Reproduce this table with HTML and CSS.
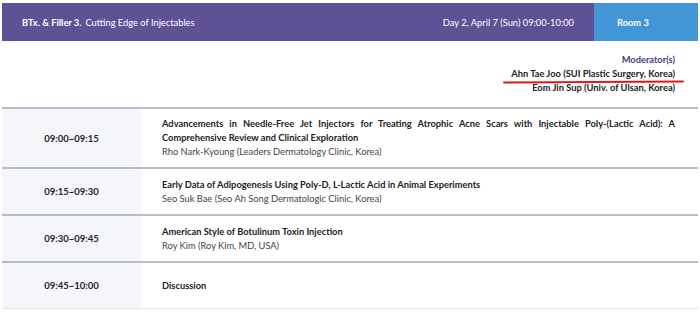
FILE: index.html
```html
<!DOCTYPE html>
<html>
<head>
<meta charset="utf-8">
<link rel="stylesheet" href="styles.css">
</head>
<body>
<div class="page">
  <div class="header">
    <div class="title"><b>BTx. &amp; Filler 3.</b> Cutting Edge of Injectables</div>
    <div class="date">Day 2, April 7 (Sun) 09:00-10:00</div>
    <div class="room">Room 3</div>
  </div>
  <div class="mods">
    <div class="mod-label">Moderator(s)</div>
    <div class="mod marked">Ahn Tae Joo (SUI Plastic Surgery, Korea)</div>
    <div class="mod">Eom Jin Sup (Univ. of Ulsan, Korea)</div>
  </div>
  <div class="table">
    <div class="row">
      <div class="time">09:00~09:15</div>
      <div class="content">
        <div class="talk">Advancements in Needle-Free Jet Injectors for Treating Atrophic Acne Scars with Injectable Poly-(Lactic Acid): A Comprehensive Review and Clinical Exploration</div>
        <div class="speaker">Rho Nark-Kyoung (Leaders Dermatology Clinic, Korea)</div>
      </div>
    </div>
    <div class="row">
      <div class="time">09:15~09:30</div>
      <div class="content">
        <div class="talk">Early Data of Adipogenesis Using Poly-D, L-Lactic Acid in Animal Experiments</div>
        <div class="speaker">Seo Suk Bae (Seo Ah Song Dermatologic Clinic, Korea)</div>
      </div>
    </div>
    <div class="row">
      <div class="time">09:30~09:45</div>
      <div class="content">
        <div class="talk">American Style of Botulinum Toxin Injection</div>
        <div class="speaker">Roy Kim (Roy Kim, MD, USA)</div>
      </div>
    </div>
    <div class="row last">
      <div class="time">09:45~10:00</div>
      <div class="content">
        <div class="talk">Discussion</div>
      </div>
    </div>
  </div>
</div>
</body>
</html>
```
FILE: styles.css
```css
* { box-sizing: border-box; }
body {
  margin: 0;
  background: #fff;
  font-family: Lato, "Open Sans", sans-serif;
  color: #222;
}
.page {
  padding: 3px 2px 0 2px;
}
.header {
  display: flex;
  height: 38px;
  align-items: stretch;
  background: #5e5196;
  color: #fff;
  font-size: 9.3px;
}
.title {
  flex: 1;
  display: flex;
  align-items: center;
  padding-left: 20px;
  gap: 4px;
}
.title b { font-weight: 700; }
.date {
  display: flex;
  align-items: center;
  padding-right: 20px;
}
.room {
  width: 104px;
  background: #4396d6;
  display: flex;
  align-items: center;
  padding-left: 23px;
  font-weight: 700;
}
.mods {
  display: flex;
  flex-direction: column;
  align-items: flex-end;
  padding: 12px 23px 12px 0;
  font-size: 9.3px;
  line-height: 14px;
}
.mod-label {
  color: #4d3a80;
  font-weight: 700;
}
.mod { font-weight: 700; color: #222; }
.marked { position: relative; }
.marked::after {
  content: "";
  position: absolute;
  left: -8px;
  right: -9px;
  bottom: -2px;
  height: 2px;
  background: #e8141c;
  border-radius: 2px;
  transform: rotate(-0.3deg);
}
.table {
  border-top: 2px solid #b8bbca;
}
.row {
  display: flex;
  border-bottom: 2px solid #b8bbca;
}
.row.last { border-bottom: 1px solid #e3e4ea; }
.time {
  width: 139px;
  flex: none;
  background: #f5f6fa;
  display: flex;
  align-items: center;
  justify-content: center;
  font-size: 9.5px;
  font-weight: 700;
  color: #222;
}
.content {
  flex: 1;
  padding: 8px 23px 8px 21px;
  min-height: 45px;
  display: flex;
  flex-direction: column;
  justify-content: center;
}
.talk {
  font-size: 9.3px;
  font-weight: 700;
  line-height: 14px;
  text-align: justify;
  color: #222;
}
.speaker {
  font-size: 9.3px;
  line-height: 14px;
  color: #444;
}
```
